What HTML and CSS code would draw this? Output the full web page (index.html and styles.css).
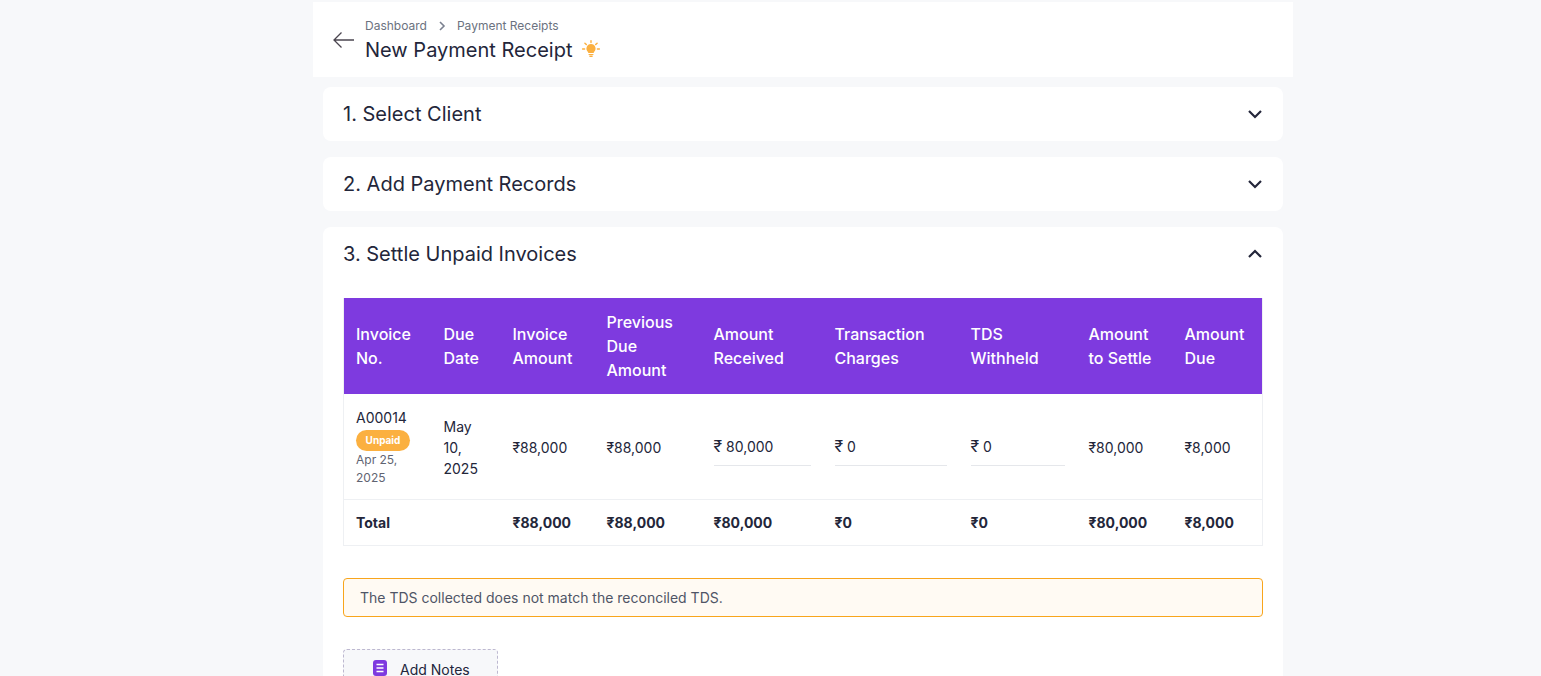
FILE: index.html
```html
<!DOCTYPE html>
<html lang="en">
<head>
<meta charset="utf-8">
<title>New Payment Receipt</title>
<link rel="stylesheet" href="styles.css">
</head>
<body>
<div class="page">
  <header class="topbar">
    <svg class="back" width="24" height="18" viewBox="0 0 24 18" fill="none" stroke="#4b4650" stroke-width="1.3"><path d="M22 9H2M9.5 1.5 2 9l7.5 7.5"/></svg>
    <div class="titles">
      <nav class="crumbs"><span>Dashboard</span><svg width="8" height="10" viewBox="0 0 8 10" fill="none" stroke="#7b8190" stroke-width="1.6"><path d="M2 1 6 5l-4 4"/></svg><span>Payment Receipts</span></nav>
      <h1 class="title">New Payment Receipt
        <svg class="bulb" width="20" height="20" viewBox="0 0 20 20" fill="#fbb040"><path d="M10 5a4.6 4.6 0 0 0-2.8 8.2V14h5.6v-.8A4.6 4.6 0 0 0 10 5zM7.6 15h4.8v1H7.6zM8.4 16.6h3.2V18H8.4z"/><path d="M10 1.6v2M3.9 4.2l1.4 1.4M16.100 4.2l-1.4 1.4M1.6 10h2M16.4 10h2" stroke="#fbb040" stroke-width="1.4" stroke-linecap="round"/></svg>
      </h1>
    </div>
  </header>

  <section class="card">
    <div class="card-head"><h2>1. Select Client</h2><svg class="chev" width="16" height="16" viewBox="0 0 16 16" fill="none" stroke="#23263a" stroke-width="2.2"><path d="M2 5 8 11 14 5"/></svg></div>
  </section>
  <section class="card">
    <div class="card-head"><h2>2. Add Payment Records</h2><svg class="chev" width="16" height="16" viewBox="0 0 16 16" fill="none" stroke="#23263a" stroke-width="2.2"><path d="M2 5 8 11 14 5"/></svg></div>
  </section>
  <section class="card">
    <div class="card-head"><h2>3. Settle Unpaid Invoices</h2><svg class="chev" width="16" height="16" viewBox="0 0 16 16" fill="none" stroke="#23263a" stroke-width="2.2"><path d="M2 11 8 5 14 11"/></svg></div>
    <div class="card-body">
      <table class="grid">
        <colgroup>
          <col class="c1"><col class="c2"><col class="c3"><col class="c4"><col class="c5"><col class="c6"><col class="c7"><col class="c8"><col class="c9">
        </colgroup>
        <thead>
          <tr>
            <th>Invoice No.</th><th>Due Date</th><th>Invoice Amount</th><th>Previous Due Amount</th><th>Amount Received</th><th>Transaction Charges</th><th>TDS Withheld</th><th>Amount to Settle</th><th>Amount Due</th>
          </tr>
        </thead>
        <tbody>
          <tr class="row">
            <td><div class="inv">A00014</div><span class="badge">Unpaid</span><div class="date">Apr 25, 2025</div></td>
            <td>May 10, 2025</td>
            <td>₹88,000</td>
            <td>₹88,000</td>
            <td><div class="field"><span class="cur">₹</span> 80,000</div></td>
            <td><div class="field"><span class="cur">₹</span> 0</div></td>
            <td><div class="field"><span class="cur">₹</span> 0</div></td>
            <td>₹80,000</td>
            <td>₹8,000</td>
          </tr>
          <tr class="total">
            <td>Total</td><td></td><td>₹88,000</td><td>₹88,000</td><td>₹80,000</td><td>₹0</td><td>₹0</td><td>₹80,000</td><td>₹8,000</td>
          </tr>
        </tbody>
      </table>
      <div class="alert">The TDS collected does not match the reconciled TDS.</div>
      <button class="notes" type="button">
        <svg class="notes-icon" width="14" height="16" viewBox="0 0 14 16"><rect width="14" height="16" rx="3" fill="#7e3adf"/><path d="M3.5 4.500h7M3.5 8h7M3.5 11.500h7" stroke="#fff" stroke-width="1.4"/></svg>
        Add Notes
      </button>
    </div>
  </section>
</div>
</body>
</html>
```
FILE: styles.css
```css
* { box-sizing: border-box; }
html, body { margin: 0; padding: 0; height: 100%; overflow: hidden; }
body { background: #f7f8fa; font-family: Inter, "Noto Sans", sans-serif; color: #23263a; }
.page { width: 980px; margin: 0 0 0 313px; padding-top: 2px; }
.topbar { display: flex; align-items: center; height: 75px; background: #fff; padding: 0 19px; gap: 9px; }
.back { flex: none; margin-top: 1px; }
.titles { display: flex; flex-direction: column; margin-top: 1px; }
.crumbs { display: flex; align-items: center; gap: 11px; font-size: 12px; line-height: 18px; color: #6b7280; position: relative; top: 1px; }
.title { display: flex; align-items: center; gap: 8px; margin: 2px 0 0; font-size: 20px; line-height: 28px; font-weight: 400; color: #23263a; }
.bulb { margin-top: -2px; margin-left: 1px; }
.card { margin: 10px 10px 0; background: #fff; border-radius: 8px; }
.card + .card { margin-top: 16px; }
.card-head { display: flex; align-items: center; justify-content: space-between; height: 54px; padding: 0 20px; }
.card-head h2 { margin: 0; font-size: 20px; line-height: 28px; font-weight: 400; }
.card-body { padding: 17px 20px 0; }
.grid { width: 920px; table-layout: fixed; border-collapse: separate; border-spacing: 0; border: 1px solid #eef0f3; border-top: 0; font-size: 14px; }
.c1 { width: 87.5px; } .c2 { width: 69px; } .c3 { width: 94px; } .c4 { width: 107px; } .c5 { width: 121px; } .c6 { width: 136px; } .c7 { width: 118px; } .c8 { width: 96px; } .c9 { width: 89.5px; }
.grid th { background: #7e3adf; color: #fff; font-size: 16px; line-height: 24px; font-weight: 500; text-align: left; padding: 12px; height: 96px; }
.grid td { padding: 12px; vertical-align: middle; line-height: 21px; }
.row td { height: 106px; border-bottom: 1px solid #eef0f3; padding-top: 14px; }
.inv { font-size: 14px; line-height: 18px; }
.badge { display: block; width: 54px; background: #fbb040; color: #fff; font-size: 10px; font-weight: 700; line-height: 21px; height: 21px; text-align: center; border-radius: 11px; margin-top: 3px; }
.date { font-size: 12px; line-height: 18px; color: #5f6472; }
.field { height: 36px; line-height: 34px; border-bottom: 1px solid #e5e7eb; }
.cur { font-size: 16px; line-height: 1; }
.total td { height: 45px; font-weight: 700; }
.alert { margin-top: 32px; height: 39px; line-height: 37px; padding: 0 16px; background: #fffaf3; border: 1px solid #f8a51c; border-radius: 4px; font-size: 14px; color: #4f5566; }
.notes { display: flex; align-items: center; gap: 13px; margin-top: 32px; width: 155px; height: 40px; padding: 0 0 0 29px; background: #f7f8fa; border: 1px dashed #bdb8d0; border-radius: 4px; font: inherit; font-size: 14px; color: #23263a; }
.notes-icon { margin-top: -2px; }
```
